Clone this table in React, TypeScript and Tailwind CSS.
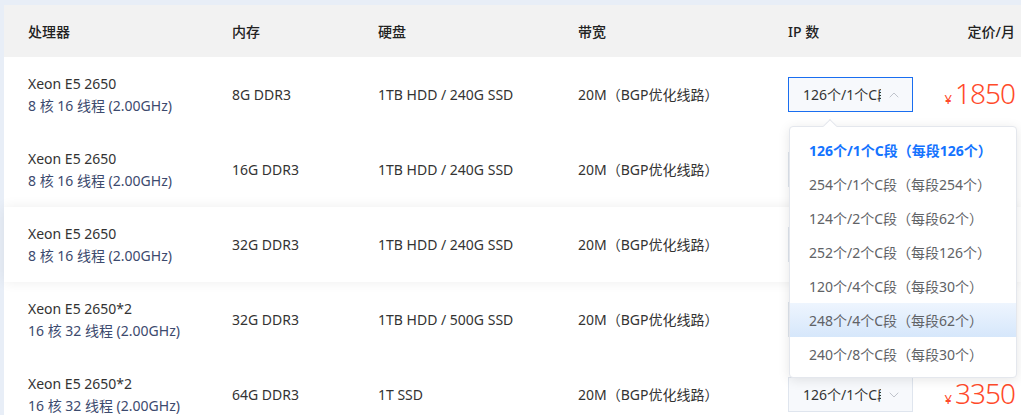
import { ChevronDown, ChevronUp } from "lucide-react";

const rows = [
	{ cpu: "Xeon E5 2650", core: "8 核 16 线程 (2.00GHz)", mem: "8G DDR3", disk: "1TB HDD / 240G SSD", price: "1850" },
	{ cpu: "Xeon E5 2650", core: "8 核 16 线程 (2.00GHz)", mem: "16G DDR3", disk: "1TB HDD / 240G SSD", price: "2150" },
	{ cpu: "Xeon E5 2650", core: "8 核 16 线程 (2.00GHz)", mem: "32G DDR3", disk: "1TB HDD / 240G SSD", price: "2450" },
	{ cpu: "Xeon E5 2650*2", core: "16 核 32 线程 (2.00GHz)", mem: "32G DDR3", disk: "1TB HDD / 500G SSD", price: "2950" },
	{ cpu: "Xeon E5 2650*2", core: "16 核 32 线程 (2.00GHz)", mem: "64G DDR3", disk: "1T SSD", price: "3350" },
];

const options = [
	"126个/1个C段（每段126个）",
	"254个/1个C段（每段254个）",
	"124个/2个C段（每段62个）",
	"252个/2个C段（每段126个）",
	"120个/4个C段（每段30个）",
	"248个/4个C段（每段62个）",
	"240个/8个C段（每段30个）",
];

const font = "font-['Noto_Sans','Noto_Sans_CJK_SC',sans-serif]";

const App = () => {
	return (
		<div className={`w-[1021px] h-[415px] overflow-hidden bg-[#e8eef7] pt-[5px] pl-[4px] ${font}`}>
			<div className="relative bg-white h-full">
				{/* header */}
				<div className="flex items-center h-[52px] bg-[#f2f2f2] text-[14px] text-[#222] font-medium">
					<div className="w-[228px] shrink-0 pl-[24px]">处理器</div>
					<div className="w-[146px] shrink-0">内存</div>
					<div className="w-[200px] shrink-0">硬盘</div>
					<div className="w-[210px] shrink-0">带宽</div>
					<div className="w-[140px] shrink-0">IP 数</div>
					<div className="flex-1 text-right pr-[6px]">定价/月</div>
				</div>

				{rows.map((r, i) => (
					<div
						key={i}
						className={`relative flex items-center h-[75px] bg-white text-[14px] text-[#333] ${
							i === 2 ? "z-[1] shadow-[0_0_12px_rgba(0,0,0,0.07)]" : ""
						}`}
					>
						<div className="w-[228px] shrink-0 pl-[24px] leading-[22px]">
							<div>{r.cpu}</div>
							<div className="text-[#3c4a6e]">{r.core}</div>
						</div>
						<div className="w-[146px] shrink-0">{r.mem}</div>
						<div className="w-[200px] shrink-0">{r.disk}</div>
						<div className="w-[210px] shrink-0">20M（BGP优化线路）</div>
						<div className="w-[140px] shrink-0">
							<div
								className={`flex items-center h-[35px] w-[125px] border bg-[#f7f9fc] pl-[14px] pr-[10px] ${
									i === 0 ? "border-[#1a6ef0]" : "border-[#dfe5ee]"
								}`}
							>
								<div className="w-[78px] overflow-hidden whitespace-nowrap text-[#333]">126个/1个C段</div>
								<div className="flex-1 flex justify-end">
									{i === 0 ? (
										<ChevronUp className="w-[16px] h-[16px] text-[#c0c4cc]" strokeWidth={1.5} />
									) : (
										<ChevronDown className="w-[16px] h-[16px] text-[#c0c4cc]" strokeWidth={1.5} />
									)}
								</div>
							</div>
						</div>
						<div className="flex-1 flex items-baseline justify-end pr-[6px] text-[#ff4a2a]">
							<span className="text-[13px] mr-[3px]">¥</span>
							<span className="text-[28px] leading-none font-light tracking-[-1px]">{r.price}</span>
						</div>
					</div>
				))}

				{/* dropdown */}
				<div className="absolute left-[785px] top-[121px] w-[228px] z-10">
					<div className="absolute left-[36px] -top-[5px] w-[10px] h-[10px] rotate-45 bg-white border-l border-t border-[#e4e7ed]" />
					<div className="bg-white border border-[#e4e7ed] rounded-[4px] shadow-[0_2px_12px_rgba(0,0,0,0.1)] py-[6px]">
						{options.map((o, i) => (
							<div
								key={o}
								className={`h-[34px] flex items-center pl-[19px] text-[14px] whitespace-nowrap ${
									i === 0 ? "text-[#1473ff] font-bold" : "text-[#606266]"
								} ${i === 5 ? "bg-gradient-to-b from-[#eef5fe] to-[#d6e7fb]" : ""}`}
							>
								{o}
							</div>
						))}
					</div>
				</div>
			</div>
		</div>
	);
};

export default App;
